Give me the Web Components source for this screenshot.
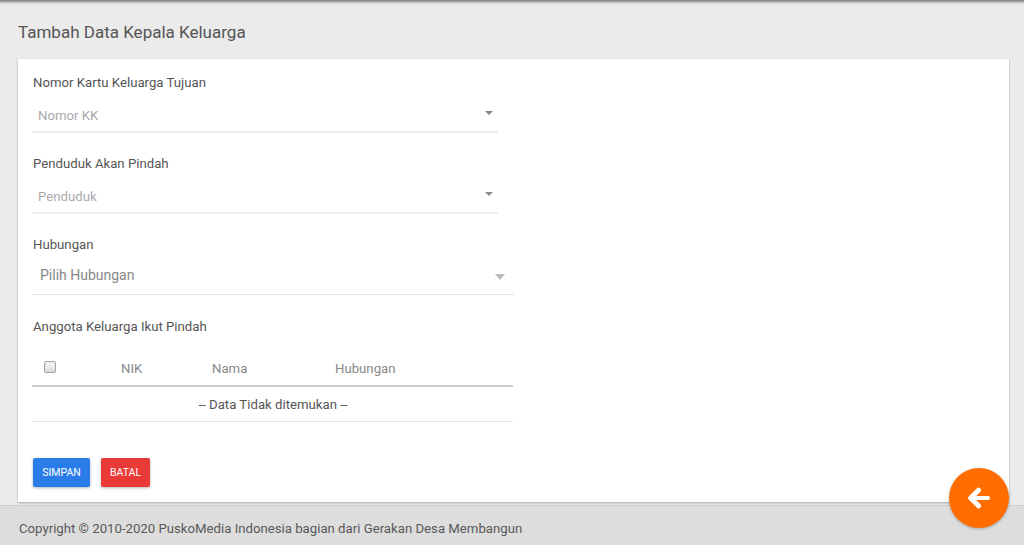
<!DOCTYPE html>
<html lang="id">
<head>
<meta charset="utf-8">
<title>Tambah Data Kepala Keluarga</title>
<style>
  html, body { margin: 0; height: 100%; }
  body { background: #ebebeb; font-family: Roboto, "Liberation Sans", Arial, sans-serif; color: #555; overflow: hidden; }
</style>
</head>
<body>
<app-page>
  <form-card>
    <select-field label="Nomor Kartu Keluarga Tujuan" placeholder="Nomor KK"></select-field>
    <select-field label="Penduduk Akan Pindah" placeholder="Penduduk"></select-field>
    <native-select label="Hubungan" value="Pilih Hubungan"></native-select>
    <member-table label="Anggota Keluarga Ikut Pindah"></member-table>
    <form-actions></form-actions>
  </form-card>
</app-page>
<script>
// Page frame: top shadow, title, content, footer, back button
class AppPage extends HTMLElement {
  constructor() {
    super();
    this.attachShadow({ mode: 'open' });
  }
  connectedCallback() {
    this.shadowRoot.innerHTML = `
      <style>
        :host { display: flex; flex-direction: column; height: 545px; position: relative; overflow: hidden; }
        .topbar { height: 0; box-shadow: 0 0 3px 2px #777; }
        h1 { margin: 0; padding: 22px 18px 0; height: 37px; font-size: 17px; line-height: 21px; font-weight: 400; color: #555; }
        main { flex: 0 0 443px; margin: 0 15px 0 18px; background: #fff; box-shadow: 0 1px 2px rgba(0,0,0,.3); }
        footer { margin-top: 3px; flex: 1; background: #ddd; border-top: 1px solid #ccc; box-sizing: border-box; padding: 13px 19px 0; font-size: 13.2px; line-height: 19px; color: #595959; }
        .fab { position: absolute; left: 949px; top: 468px; width: 60px; height: 60px; border-radius: 50%; background: #ff6d00; box-shadow: 0 1px 3px rgba(0,0,0,.25); display: flex; align-items: center; justify-content: center; }
      </style>
      <div class="topbar"></div>
      <h1>Tambah Data Kepala Keluarga</h1>
      <main><slot></slot></main>
      <footer>Copyright © 2010-2020 PuskoMedia Indonesia bagian dari Gerakan Desa Membangun</footer>
      <div class="fab">
        <svg width="24" height="22" viewBox="0 0 24 22" fill="none" stroke="#fff" stroke-linecap="round" stroke-linejoin="round">
          <path stroke-width="4" d="M21 11H5"/>
          <path stroke-width="5" d="M11.5 3.2L3.7 11l7.8 7.8"/>
        </svg>
      </div>
    `;
  }
}
customElements.define('app-page', AppPage);

class FormCard extends HTMLElement {
  constructor() {
    super();
    this.attachShadow({ mode: 'open' });
  }
  connectedCallback() {
    this.shadowRoot.innerHTML = `
      <style>
        :host { display: flex; flex-direction: column; padding: 14px 0 0 14px; }
      </style>
      <slot></slot>
    `;
  }
}
customElements.define('form-card', FormCard);

// Select2-like field with underline
class SelectField extends HTMLElement {
  constructor() {
    super();
    this.attachShadow({ mode: 'open' });
  }
  connectedCallback() {
    this.shadowRoot.innerHTML = `
      <style>
        :host { display: block; width: 466px; height: 81px; }
        label { display: block; font-size: 13.2px; line-height: 19px; color: #555; padding-left: 1px; }
        .box { margin-top: 7px; height: 32px; border-bottom: 2px solid #eee; display: flex; justify-content: space-between; padding: 0 5px 0 6px; }
        .ph { font-size: 13.2px; line-height: 31px; margin-top: 1px; color: #a9a9a9; }
        .arrow { margin-top: 12px; width: 0; height: 0; border-left: 4px solid transparent; border-right: 4px solid transparent; border-top: 4px solid #888; }
      </style>
      <label>${this.getAttribute('label')}</label>
      <div class="box"><span class="ph">${this.getAttribute('placeholder')}</span><span class="arrow"></span></div>
    `;
  }
}
customElements.define('select-field', SelectField);

// Native looking select
class NativeSelect extends HTMLElement {
  constructor() {
    super();
    this.attachShadow({ mode: 'open' });
  }
  connectedCallback() {
    this.shadowRoot.innerHTML = `
      <style>
        :host { display: block; width: 482px; height: 82px; }
        label { display: block; font-size: 13.2px; line-height: 19px; color: #555; padding-left: 1px; }
        .box { height: 37px; margin-top: 3px; border-bottom: 1px solid #e3e3e3; display: flex; justify-content: space-between; padding: 0 9px 0 8px; }
        .val { font-size: 14px; line-height: 24px; margin-top: 6px; color: #888; }
        .arrow { margin-top: 17px; width: 0; height: 0; border-left: 5.5px solid transparent; border-right: 5.5px solid transparent; border-top: 6px solid #bbb; }
      </style>
      <label>${this.getAttribute('label')}</label>
      <div class="box"><span class="val">${this.getAttribute('value')}</span><span class="arrow"></span></div>
    `;
  }
}
customElements.define('native-select', NativeSelect);

class MemberTable extends HTMLElement {
  constructor() {
    super();
    this.attachShadow({ mode: 'open' });
  }
  connectedCallback() {
    this.shadowRoot.innerHTML = `
      <style>
        :host { display: block; width: 481px; margin-top: 0; }
        label { display: block; font-size: 13.2px; line-height: 19px; color: #555; padding-left: 1px; }
        .head { margin-top: 11px; height: 38px; border-bottom: 2px solid #ccc; display: grid; grid-template-columns: 89px 91px 123px 1fr; font-size: 13.2px; color: #888; }
        .head span { line-height: 44px; }
        .check { padding-left: 12px; padding-top: 14px; box-sizing: border-box; }
        .check i { display: block; width: 10px; height: 10px; border: 1px solid #a5a5a5; border-radius: 2px; background: linear-gradient(#f4f4f4, #dcdcdc); }
        .empty { height: 34px; line-height: 36px; text-align: center; font-size: 13.2px; color: #555; border-bottom: 1px solid #e3e3e3; padding-left: 1px; }
      </style>
      <label>${this.getAttribute('label')}</label>
      <div class="head">
        <div class="check"><i></i></div>
        <span>NIK</span><span>Nama</span><span>Hubungan</span>
      </div>
      <div class="empty">-- Data Tidak ditemukan --</div>
    `;
  }
}
customElements.define('member-table', MemberTable);

class FormActions extends HTMLElement {
  constructor() {
    super();
    this.attachShadow({ mode: 'open' });
  }
  connectedCallback() {
    this.shadowRoot.innerHTML = `
      <style>
        :host { display: flex; gap: 11px; margin: 36px 0 0 1px; }
        button { height: 29px; border: 0; border-radius: 2px; padding: 0; font: 400 10.5px/29px Roboto, "Liberation Sans", Arial, sans-serif; color: #fff; box-shadow: 0 1px 3px rgba(0,0,0,.3); }
        .save { width: 57px; background: #2a7de9; }
        .cancel { width: 49px; background: #e93a37; }
      </style>
      <button class="save">SIMPAN</button>
      <button class="cancel">BATAL</button>
    `;
  }
}
customElements.define('form-actions', FormActions);
</script>
</body>
</html>
